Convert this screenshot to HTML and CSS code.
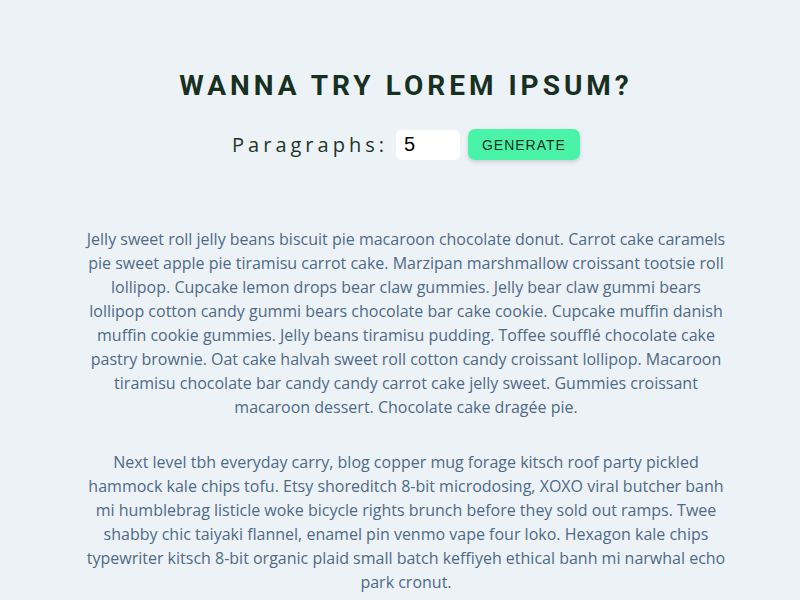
FILE: index.html
```html
<!DOCTYPE html>
<html lang="en">
<head>
    <meta charset="UTF-8">
    <meta name="viewport" content="width=device-width, initial-scale=1.0">
    <title>Lorem Ipsum Generator</title>
    <link rel="stylesheet" href="styles.css">
</head>
<body>
    <section class="section-center">
        <h3>wanna try lorem ipsum?</h3>
        <form class="lorem-form">
            <label for="amount">paragraphs:</label>
            <input type="number" name="amount" id="amount" value="5">
            <button type="submit" class="btn">generate</button>
        </form>
        <article class="lorem-text">
            <p>Jelly sweet roll jelly beans biscuit pie macaroon chocolate donut. Carrot cake caramels pie sweet apple pie tiramisu carrot cake. Marzipan marshmallow croissant tootsie roll lollipop. Cupcake lemon drops bear claw gummies. Jelly bear claw gummi bears lollipop cotton candy gummi bears chocolate bar cake cookie. Cupcake muffin danish muffin cookie gummies. Jelly beans tiramisu pudding. Toffee soufflé chocolate cake pastry brownie. Oat cake halvah sweet roll cotton candy croissant lollipop. Macaroon tiramisu chocolate bar candy candy carrot cake jelly sweet. Gummies croissant macaroon dessert. Chocolate cake dragée pie.</p>
            <p>Next level tbh everyday carry, blog copper mug forage kitsch roof party pickled hammock kale chips tofu. Etsy shoreditch 8-bit microdosing, XOXO viral butcher banh mi humblebrag listicle woke bicycle rights brunch before they sold out ramps. Twee shabby chic taiyaki flannel, enamel pin venmo vape four loko. Hexagon kale chips typewriter kitsch 8-bit organic plaid small batch keffiyeh ethical banh mi narwhal echo park cronut.</p>
        </article>
    </section>
</body>
</html>
```

FILE: styles.css
```css
body {
    margin: 0;
    padding-left: 12px;
    background: #edf2f7;
    font-family: "Open Sans", sans-serif;
    color: #4d6a87;
    overflow: hidden;
}
.section-center {
    width: 640px;
    margin: 0 auto;
    padding-top: 69px;
    text-align: center;
}
h3 {
    margin: 0;
    font-family: Roboto, sans-serif;
    font-size: 28px;
    font-weight: 700;
    letter-spacing: 4px;
    text-transform: uppercase;
    color: #17301f;
}
.lorem-form {
    display: flex;
    justify-content: center;
    align-items: center;
    margin-top: 27px;
}
label {
    font-size: 20px;
    letter-spacing: 4px;
    text-transform: capitalize;
    color: #1d3528;
    margin-right: 8px;
}
input {
    width: 64px;
    height: 30px;
    box-sizing: border-box;
    padding: 0 8px;
    border: none;
    border-radius: 6px;
    background: white;
    font-family: "Liberation Sans", Arial, sans-serif;
    font-size: 20px;
    color: #000;
    -moz-appearance: textfield;
}
input::-webkit-outer-spin-button,
input::-webkit-inner-spin-button {
    -webkit-appearance: none;
    margin: 0;
}
.btn {
    margin-left: 8px;
    height: 31px;
    padding: 0 14px;
    border: none;
    border-radius: 7px;
    background: #49f4a8;
    color: #17301f;
    font-family: "Liberation Sans", Arial, sans-serif;
    font-size: 14px;
    letter-spacing: 1px;
    text-transform: uppercase;
    box-shadow: 0 2px 4px rgba(0,0,0,0.15);
    cursor: pointer;
}
.lorem-text {
    margin-top: 67px;
}
.lorem-text p {
    margin: 0 0 31px;
    font-size: 16px;
    line-height: 24px;
}
```
